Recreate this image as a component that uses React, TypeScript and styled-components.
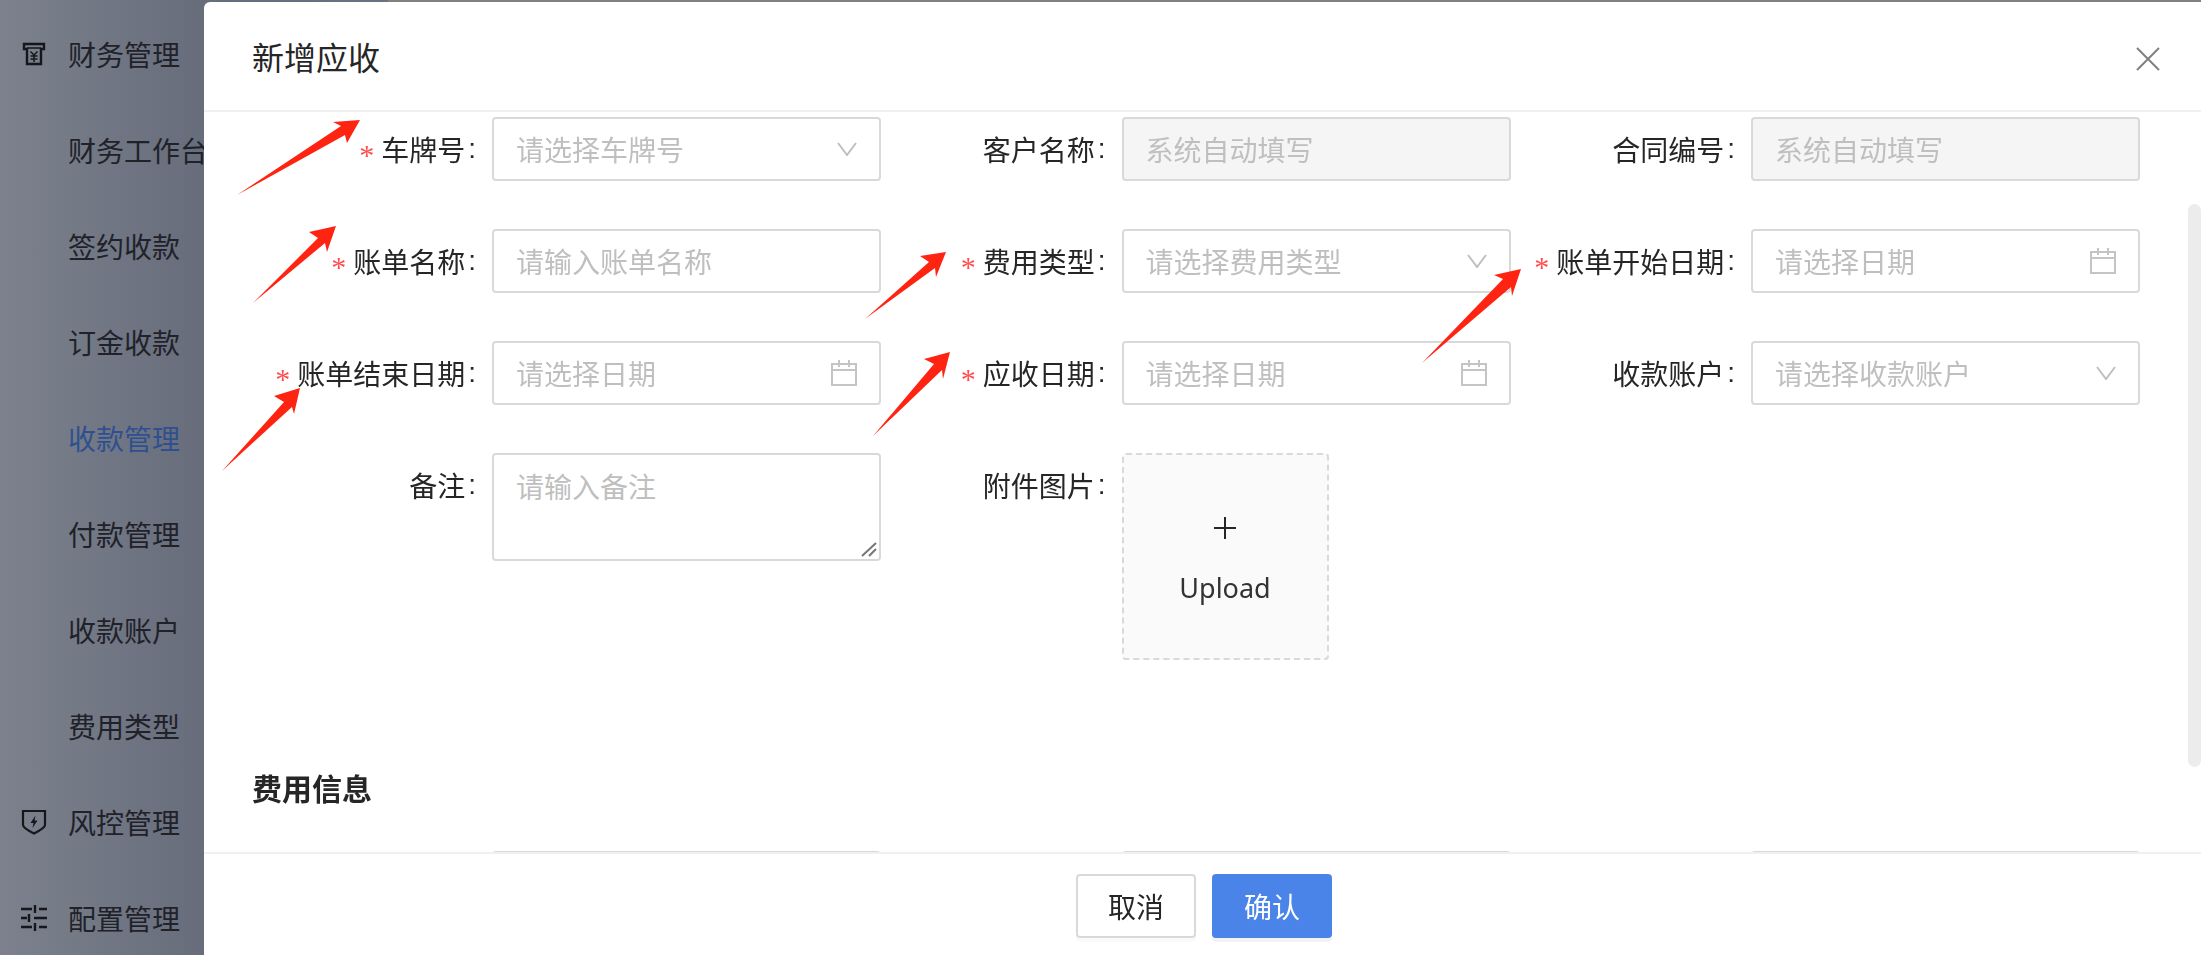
import React from 'react'
import styled, { createGlobalStyle } from 'styled-components'

const GlobalStyle = createGlobalStyle`
  html, body {
    margin: 0;
    height: 100%;
    overflow: hidden;
    background: #808080;
    font-family: "Noto Sans CJK SC", "Noto Sans", sans-serif;
  }
  * {
    box-sizing: border-box;
  }
`

const Sidebar = styled.nav`
  width: 388px;
  height: 955px;
  padding-top: 6px;
  background: linear-gradient(90deg, #7c818d 0%, #676d7b 52%, #6b7181 100%);
`

const MenuItem = styled.div<{ $active?: boolean }>`
  display: flex;
  align-items: center;
  height: 96px;
  padding-left: 68px;
  position: relative;
  font-size: 28px;
  white-space: nowrap;
  color: ${(p) => (p.$active ? '#2f5090' : '#1f2229')};
`

const MenuIcon = styled.svg`
  position: absolute;
  left: 21px;
  top: 50%;
  transform: translateY(-50%);
`

const Modal = styled.section`
  position: fixed;
  left: 204px;
  top: 2px;
  right: 0;
  bottom: 0;
  display: flex;
  flex-direction: column;
  background: #fff;
  border-top-left-radius: 6px;
`

const Header = styled.header`
  flex: none;
  height: 110px;
  display: flex;
  align-items: center;
  justify-content: space-between;
  padding: 0 41px 0 48px;
  border-bottom: 2px solid #f0f0f0;
`

const Title = styled.h1`
  margin: 0;
  font-size: 32px;
  font-weight: 400;
  color: #262626;
`

const CloseIcon = styled.svg`
  margin-top: 6px;
  color: #808080;
`

const Body = styled.div`
  flex: 1;
  min-height: 0;
  overflow: hidden;
  position: relative;
  padding: 5px 0 0 48px;
`

const ScrollThumb = styled.div`
  position: absolute;
  right: 0;
  top: 92px;
  width: 13px;
  height: 563px;
  border-radius: 7px;
  background: #ececec;
`

const FormGrid = styled.div`
  display: grid;
  grid-template-columns: repeat(3, 629.5px);
  row-gap: 48px;
`

const Field = styled.div`
  display: flex;
  align-items: flex-start;
`

const Label = styled.label`
  flex: none;
  width: 240px;
  height: 64px;
  padding-right: 16px;
  display: flex;
  align-items: center;
  justify-content: flex-end;
  font-size: 28px;
  color: #262626;
`

const Star = styled.span`
  margin: 12px 7px 0 0;
  font-family: "Liberation Serif", serif;
  font-size: 30px;
  line-height: 1;
  color: #ff4d4f;
`

const Colon = styled.span`
  margin-left: 3px;
  font-family: "Liberation Sans", sans-serif;
`

const Control = styled.div<{ $disabled?: boolean }>`
  width: 389px;
  height: 64px;
  flex: none;
  display: flex;
  align-items: center;
  justify-content: space-between;
  padding: 0 22px;
  border: 2px solid #d9d9d9;
  border-radius: 4px;
  background: ${(p) => (p.$disabled ? '#f5f5f5' : '#fff')};
`

const Placeholder = styled.span`
  font-size: 28px;
  color: #bfbfbf;
`

const TextArea = styled.div`
  position: relative;
  width: 389px;
  height: 108px;
  padding: 0 22px;
  line-height: 62px;
  border: 2px solid #d9d9d9;
  border-radius: 4px;
  background: #fff;
`

const ResizeHandle = styled.svg`
  position: absolute;
  right: 0;
  bottom: 0;
`

const Upload = styled.div`
  width: 207px;
  height: 207px;
  display: flex;
  flex-direction: column;
  align-items: center;
  justify-content: center;
  gap: 31px;
  padding-top: 9px;
  background: #fafafa;
  border: 2px dashed #d9d9d9;
  border-radius: 4px;
`

const UploadText = styled.span`
  font-family: "Noto Sans", sans-serif;
  font-size: 27px;
  line-height: 36px;
  color: #333;
`

const SectionTitle = styled.h2`
  margin: 105px 0 42px;
  height: 44px;
  line-height: 44px;
  font-size: 30px;
  font-weight: 700;
  color: #262626;
`

const Footer = styled.footer`
  flex: none;
  height: 103px;
  display: flex;
  justify-content: center;
  gap: 16px;
  padding: 20px 0 0 3px;
  border-top: 2px solid #f0f0f0;
`

const Button = styled.button<{ $primary?: boolean }>`
  width: 120px;
  height: 64px;
  padding: 0;
  font-family: inherit;
  font-size: 28px;
  border-radius: 4px;
  border: 2px solid ${(p) => (p.$primary ? '#4a84e8' : '#d9d9d9')};
  background: ${(p) => (p.$primary ? '#4a84e8' : '#fff')};
  color: ${(p) => (p.$primary ? '#fff' : '#262626')};
  box-shadow: 0 4px 0 rgba(0, 0, 0, ${(p) => (p.$primary ? 0.05 : 0.02)});
`

const ArrowLayer = styled.svg`
  position: fixed;
  left: 0;
  top: 0;
  pointer-events: none;
`

const Chevron = () => (
  <svg width="20" height="14" viewBox="0 0 20 14" fill="none" stroke="#bfbfbf" strokeWidth="2">
    <path d="M1 1l9 12 9-12" />
  </svg>
)

const Calendar = () => (
  <svg width="26" height="26" viewBox="0 0 26 26" fill="none" stroke="#c4c4c4" strokeWidth="2">
    <path d="M1 4h24v21H1zM1 10h24M8 0v7M18 0v7" />
  </svg>
)

type Kind = 'select' | 'date' | 'input' | 'disabled'

const FormField = ({ label, required, kind, hint }: { label: string; required?: boolean; kind: Kind; hint: string }) => (
  <Field>
    <Label>
      {required && <Star>*</Star>}
      {label}
      <Colon>:</Colon>
    </Label>
    <Control $disabled={kind === 'disabled'}>
      <Placeholder>{hint}</Placeholder>
      {kind === 'select' && <Chevron />}
      {kind === 'date' && <Calendar />}
    </Control>
  </Field>
)

const menu = ['财务管理', '财务工作台', '签约收款', '订金收款', '收款管理', '付款管理', '收款账户', '费用类型', '风控管理', '配置管理']

const menuIcons: Record<string, React.ReactNode> = {
  财务管理: (
    <MenuIcon width="26" height="24" viewBox="0 0 26 24" fill="none" stroke="#15171c" strokeWidth="2.4">
      <path d="M3 2h20v5h-3v15H6V7H3z" />
      <path d="M6 6h14M9.5 9.5L13 13l3.500-3.500M13 13v7M9.500 14h7M9.500 17h7" strokeWidth="1.500" />
    </MenuIcon>
  ),
  风控管理: (
    <MenuIcon width="26" height="26" viewBox="0 0 26 26" fill="none" stroke="#15171c" strokeWidth="2.200">
      <path d="M2 2h22v14c0 3-6 6-11 8.500C8 22 2 19 2 16z" />
      <path d="M14.500 6.500L9.500 14h3l-1 5 5-7.500h-3z" fill="#15171c" stroke="none" />
    </MenuIcon>
  ),
  配置管理: (
    <MenuIcon width="26" height="28" viewBox="0 0 26 28" fill="none" stroke="#15171c" strokeWidth="2.400">
      <path d="M0 5h11M18 5h8M14 1v8M0 14h6M13 14h13M8 10v8M0 23h11M18 23h8M14 19v8" />
    </MenuIcon>
  ),
}

// red annotation arrows laid over the form: tail, notch, wing, tip, wing, notch
const arrows = [
  '237,195 341,126 333,122 360,120 347,143 345,135',
  '253,303 318,238 309,232 336,226 327,252 325,243',
  '222,471 284,402 274,396 300,388 294,414 292,407',
  '865,319 929,262 920,256 946,252 936,277 935,268',
  '873,436 934,364 924,359 950,352 943,379 942,370',
  '1422,363 1503,279 1494,275 1521,269 1512,296 1511,287',
]

const App: React.FC = () => {
  return (
    <>
      <GlobalStyle />
      <Sidebar>
        {menu.map((name) => (
          <MenuItem key={name} $active={name === '收款管理'}>
            {menuIcons[name]}
            {name}
          </MenuItem>
        ))}
      </Sidebar>
      <Modal>
        <Header>
          <Title>新增应收</Title>
          <CloseIcon width="24" height="24" viewBox="0 0 24 24" fill="none" stroke="currentColor" strokeWidth="2">
            <path d="M1 1l22 22M23 1L1 23" />
          </CloseIcon>
        </Header>
        <Body>
          <FormGrid>
            <FormField label="车牌号" required kind="select" hint="请选择车牌号" />
            <FormField label="客户名称" kind="disabled" hint="系统自动填写" />
            <FormField label="合同编号" kind="disabled" hint="系统自动填写" />
            <FormField label="账单名称" required kind="input" hint="请输入账单名称" />
            <FormField label="费用类型" required kind="select" hint="请选择费用类型" />
            <FormField label="账单开始日期" required kind="date" hint="请选择日期" />
            <FormField label="账单结束日期" required kind="date" hint="请选择日期" />
            <FormField label="应收日期" required kind="date" hint="请选择日期" />
            <FormField label="收款账户" kind="select" hint="请选择收款账户" />
            <Field>
              <Label>
                备注
                <Colon>:</Colon>
              </Label>
              <TextArea>
                <Placeholder>请输入备注</Placeholder>
                <ResizeHandle width="20" height="20" viewBox="0 0 20 20" stroke="#777" strokeWidth="2">
                  <path d="M3 17L17 4M10 17l7-7" />
                </ResizeHandle>
              </TextArea>
            </Field>
            <Field>
              <Label>
                附件图片
                <Colon>:</Colon>
              </Label>
              <Upload>
                <svg width="22" height="22" viewBox="0 0 22 22" stroke="#262626" strokeWidth="2">
                  <path d="M0 11h22M11 0v22" />
                </svg>
                <UploadText>Upload</UploadText>
              </Upload>
            </Field>
          </FormGrid>
          <SectionTitle>费用信息</SectionTitle>
          <FormGrid>
            <Field>
              <Label />
              <Control />
            </Field>
            <Field>
              <Label />
              <Control />
            </Field>
            <Field>
              <Label />
              <Control />
            </Field>
          </FormGrid>
          <ScrollThumb />
        </Body>
        <Footer>
          <Button>取消</Button>
          <Button $primary>确认</Button>
        </Footer>
      </Modal>
      <ArrowLayer width="2201" height="955" viewBox="0 0 2201 955" fill="#ff2412">
        {arrows.map((points) => (
          <polygon key={points} points={points} />
        ))}
      </ArrowLayer>
    </>
  )
}

export default App
